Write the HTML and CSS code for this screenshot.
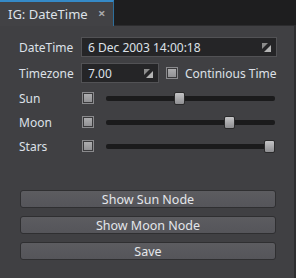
FILE: index.html
```html
<!DOCTYPE html>
<html lang="en">
<head>
    <meta charset="UTF-8">
    <meta name="viewport" content="width=device-width, initial-scale=1.0">
    <title>IG: DateTime</title>
    <link rel="stylesheet" href="styles.css">
</head>
<body>
    <div class="tabbar">
        <div class="tab">
            <span class="tab-title">IG: DateTime</span>
            <span class="tab-close">&#215;</span>
        </div>
    </div>
    <div class="panel">
        <div class="row">
            <label class="label">DateTime</label>
            <div class="field field-wide">
                <span>6 Dec 2003 14:00:18</span>
                <svg class="grip" width="9" height="9" viewBox="0 0 9 9">
                    <polygon points="0,0 6,0 0,6" fill="#8c8c8c"/>
                    <polygon points="9,2 9,9 2,9" fill="#b4b4b4"/>
                </svg>
            </div>
        </div>
        <div class="row">
            <label class="label">Timezone</label>
            <div class="field field-short">
                <span>7.00</span>
                <svg class="grip" width="9" height="9" viewBox="0 0 9 9">
                    <polygon points="0,0 6,0 0,6" fill="#8c8c8c"/>
                    <polygon points="9,2 9,9 2,9" fill="#b4b4b4"/>
                </svg>
            </div>
            <span class="check check-inline"></span>
            <span class="check-text">Continious Time</span>
        </div>

        <div class="sliders">
            <div class="row slider-row">
                <label class="label">Sun</label>
                <span class="check"></span>
                <div class="track"><span class="thumb" style="left: 68px"></span></div>
            </div>
            <div class="row slider-row">
                <label class="label">Moon</label>
                <span class="check"></span>
                <div class="track"><span class="thumb" style="left: 118px"></span></div>
            </div>
            <div class="row slider-row">
                <label class="label">Stars</label>
                <span class="check"></span>
                <div class="track"><span class="thumb" style="left: 158px"></span></div>
            </div>
        </div>

        <div class="buttons">
            <button type="button">Show Sun Node</button>
            <button type="button">Show Moon Node</button>
            <button type="button">Save</button>
        </div>
    </div>
</body>
</html>
```

FILE: styles.css
```css
body {
    margin: 0;
    padding: 0;
    width: 296px;
    height: 278px;
    overflow: hidden;
    background-color: #1e1e1f;
    font-family: "Noto Sans", "DejaVu Sans", sans-serif;
    font-size: 12px;
    color: #dde1e8;
}
.tabbar {
    height: 25px;
    display: flex;
    border-bottom: 1px solid #2c2c2e;
}
.tab {
    width: 114px;
    height: 26px;
    padding: 0 0 0 8px;
    display: flex;
    align-items: center;
    justify-content: space-between;
    background-color: #424245;
    border-top: 2px solid #3589c6;
    border-right: 1px solid #2d6f9c;
    box-sizing: border-box;
}
.tab-title {
    margin-top: -1px;
    font-size: 13px;
}
.tab-close {
    width: 15px;
    color: #a8a8ab;
    font-size: 13px;
    font-weight: bold;
    margin-top: -2px;
}
.panel {
    height: 252px;
    background-color: #404043;
    border-right: 2px solid #2e2e30;
    box-sizing: border-box;
    padding: 11px 0 0 19px;
}
.row {
    display: flex;
    align-items: center;
    height: 20px;
    margin-bottom: 6px;
}
.label {
    width: 62px;
    flex-shrink: 0;
}
.field {
    height: 20px;
    box-sizing: border-box;
    background-color: #252527;
    border: 1px solid #525255;
    display: flex;
    align-items: center;
    justify-content: space-between;
    padding: 0 5px 0 6px;
}
.field-wide {
    width: 196px;
}
.field-short {
    width: 78px;
}
.check {
    width: 12px;
    height: 12px;
    box-sizing: border-box;
    border: 1px solid #8a8a8d;
    background: linear-gradient(#b0b0b2, #8e8e91);
    box-shadow: inset 0 0 0 1px #3a3a3c;
    flex-shrink: 0;
}
.check-inline {
    margin-left: 7px;
    margin-right: 7px;
}
.sliders {
    margin-top: -1px;
}
.slider-row {
    height: 20px;
    margin-bottom: 4px;
}
.slider-row .check {
    margin-left: 1px;
}
.track {
    position: relative;
    margin-left: 12px;
    width: 169px;
    height: 5px;
    background-color: #1b1b1c;
    border-radius: 2px;
}
.thumb {
    position: absolute;
    top: -4px;
    width: 11px;
    height: 13px;
    box-sizing: border-box;
    border: 1px solid #2a2a2b;
    border-radius: 2px;
    background: linear-gradient(#c4c4c6, #8e8e91);
}
.buttons {
    margin-top: 34px;
    display: flex;
    flex-direction: column;
    gap: 8px;
    width: 256px;
    margin-left: 1px;
}
button {
    height: 18px;
    padding: 0;
    font-family: "Noto Sans", "DejaVu Sans", sans-serif;
    font-size: 12.5px;
    color: #e4e6ea;
    background: linear-gradient(#5c5c60, #55555a);
    border: 1px solid #2f2f31;
    border-radius: 3px;
    cursor: pointer;
}
```
